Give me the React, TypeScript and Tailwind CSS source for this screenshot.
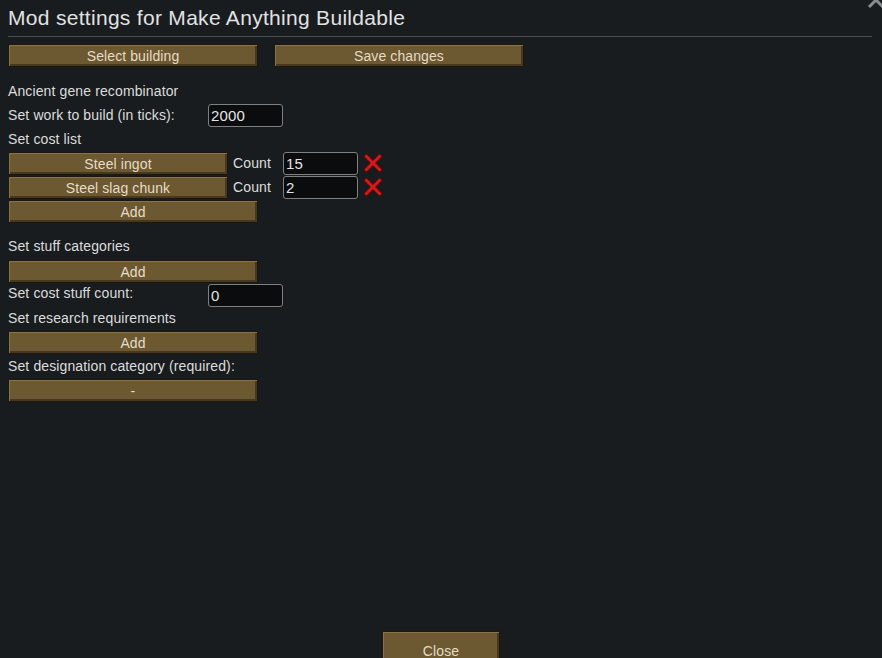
import React from 'react';

function Btn({ label, w = 'w-[250px]', className = '' }: { label: string; w?: string; className?: string }) {
  return (
    <div
      className={`${w} h-[23px] flex items-center justify-center bg-[#6c5831] border border-[#1b1812] shadow-[inset_1px_1px_0_#8a7447,inset_-2px_-2px_0_#463920] text-[#e6dcc6] text-[14px] tracking-[0.1px] leading-none ${className}`}
    >
      {label}
    </div>
  );
}

function Field({ value, w = 'w-[75px]' }: { value: string; w?: string }) {
  return (
    <div className={`${w} h-[23px] flex items-center pl-[2px] rounded-[3px] border border-[#808080] bg-[#0b0c0d] text-[#e4e4e4] text-[15px] leading-none`}>
      {value}
    </div>
  );
}

function RemoveIcon() {
  return (
    <svg width="18" height="18" viewBox="0 0 18 18" className="block">
      <path d="M2 2 L16 16 M16 2 L2 16" stroke="#5a0a0a" strokeWidth="4.5" strokeLinecap="square" />
      <path d="M2.5 2.5 L15.5 15.5 M15.5 2.5 L2.5 15.5" stroke="#d8191b" strokeWidth="2.8" strokeLinecap="square" />
    </svg>
  );
}

function CostRow({ label, count }: { label: string; count: string }) {
  return (
    <div className="h-[24px] flex items-start pt-[1px]">
      <Btn label={label} w="w-[220px]" />
      <div className="ml-[5px] w-[50px] h-[23px] flex items-center text-[14px]">Count</div>
      <Field value={count} />
      <div className="ml-[6px] mt-[2px]">
        <RemoveIcon />
      </div>
    </div>
  );
}

function TextRow({ children }: { children: React.ReactNode }) {
  return <div className="h-[24px] flex items-center text-[14px]">{children}</div>;
}

export default function App() {
  return (
    <div
      className="relative w-[882px] h-[658px] overflow-hidden bg-[#191c1f] text-[#dcdcdc] tracking-[0.12px]"
      style={{ fontFamily: '"Liberation Sans", Arial, sans-serif' }}
    >
      {/* close X, cut off at top */}
      <svg width="20" height="20" viewBox="0 0 20 20" className="absolute left-[866px] top-[-10px]">
        <path d="M3 3 L17 17 M17 3 L3 17" stroke="#8a8d90" strokeWidth="3" />
      </svg>

      <div className="flex flex-col px-[8px]">
        <div className="h-[37px] w-[864px] border-b border-[#4a4d51] pt-[6px] text-[21px] tracking-[0.3px] leading-[24px] text-[#e2e2e2]">
          Mod settings for Make Anything Buildable
        </div>

        <div className="mt-[7px] flex gap-[16px]">
          <Btn label="Select building" />
          <Btn label="Save changes" />
        </div>

        <div className="mt-[12px]">
          <TextRow>Ancient gene recombinator</TextRow>
        </div>
        <div className="h-[24px] flex items-center">
          <div className="w-[200px] text-[14px]">Set work to build (in ticks):</div>
          <Field value="2000" />
        </div>
        <TextRow>Set cost list</TextRow>

        <CostRow label="Steel ingot" count="15" />
        <CostRow label="Steel slag chunk" count="2" />
        <div className="h-[24px] pt-[1px]">
          <Btn label="Add" />
        </div>

        <div className="mt-[11px]">
          <TextRow>Set stuff categories</TextRow>
        </div>
        <div className="h-[24px] pt-[2px]">
          <Btn label="Add" />
        </div>
        <div className="h-[24px] flex items-start">
          <div className="w-[200px] h-[23px] flex items-center text-[14px]">Set cost stuff count:</div>
          <div className="mt-[2px]">
            <Field value="0" />
          </div>
        </div>
        <TextRow>Set research requirements</TextRow>
        <div className="h-[24px] pt-[1px]">
          <Btn label="Add" />
        </div>
        <TextRow>Set designation category (required):</TextRow>
        <div className="h-[24px] pt-[1px]">
          <Btn label="-" />
        </div>

        <div className="mt-[229px] flex justify-center">
          <div className="w-[118px] h-[38px] flex items-center justify-center bg-[#6c5831] border border-[#1b1812] shadow-[inset_1px_1px_0_#8a7447,inset_-2px_-2px_0_#463920] text-[#e6dcc6] text-[14px] pt-[2px]">
            Close
          </div>
        </div>
      </div>
    </div>
  );
}
